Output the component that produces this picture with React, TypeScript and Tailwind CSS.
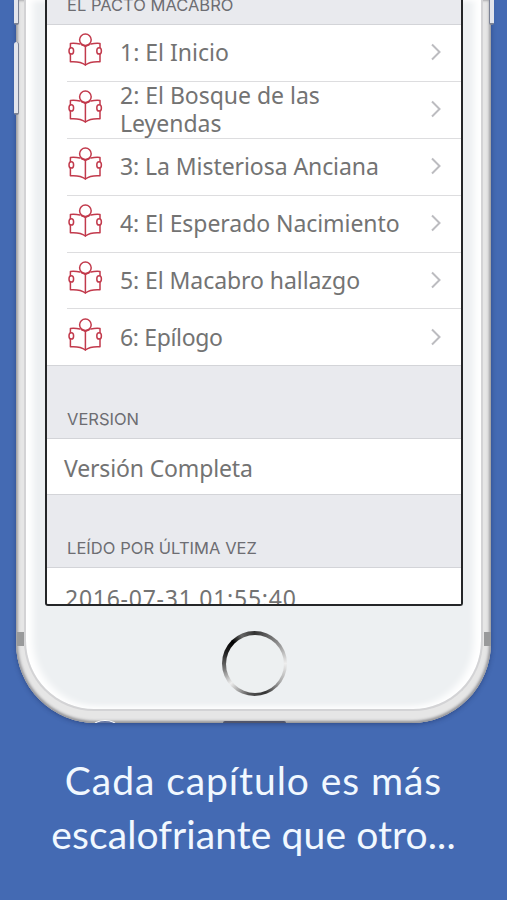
import React from 'react';

const chapters = [
  { id: 1, title: '1: El Inicio', spacing: 'tracking-[0px]' },
  { id: 2, title: '2: El Bosque de las Leyendas', spacing: 'tracking-[-0.02px]' },
  { id: 3, title: '3: La Misteriosa Anciana', spacing: 'tracking-[-0.07px]' },
  { id: 4, title: '4: El Esperado Nacimiento', spacing: 'tracking-[-0.06px]' },
  { id: 5, title: '5: El Macabro hallazgo', spacing: 'tracking-[-0.07px]' },
  { id: 6, title: '6: Epílogo', spacing: 'tracking-[-0.35px]' },
];

const ReaderIcon = () => (
  <svg
    width="36"
    height="36"
    viewBox="0 0 36 36"
    fill="none"
    stroke="#c23a4c"
    strokeWidth="1.5"
    strokeLinejoin="round"
    strokeLinecap="round"
    className="-mt-[3px] shrink-0"
  >
    <circle cx="18.4" cy="7.8" r="5.8" />
    <path d="M3.400 15.600V11.400c3.500-.3 6.500-.1 9.500.6" />
    <path d="M23.900 12c3-.7 6-.9 9.100-.6V15.600" />
    <path d="M14.600 12.700c1.600.4 2.800.9 3.800 1.600 1-.7 2.200-1.200 3.800-1.600" />
    <path d="M3.400 22.200v7.600c6-.4 11.500.5 15 3.200 3.500-2.700 9-3.600 14.600-3.200v-7.600" />
    <path d="M18.400 14.300V33" />
    <ellipse cx="4.300" cy="18.900" rx="2.300" ry="3.200" />
    <ellipse cx="32.100" cy="18.900" rx="2.300" ry="3.200" />
  </svg>
);

const Chevron = () => (
  <svg width="12" height="18" viewBox="0 0 12 18" fill="none" stroke="#bcbcc0" strokeWidth="2">
    <path d="M2 1.500 9.500 9 2 16.500" />
  </svg>
);

const SectionHeader = ({ title, spacing }: { title: string; spacing: string }) => (
  <div className="flex h-[74px] items-end border-y border-[#d3d4d8] bg-[#e9eaee] pb-[7px] pl-5">
    <h2 className={`font-['Inter'] text-[16.5px] leading-6 whitespace-nowrap text-[#6d6d72] ${spacing}`}>{title}</h2>
  </div>
);

const App = () => {
  return (
    <main className="flex h-[900px] w-[507px] flex-col items-center overflow-hidden bg-[#446ab3]">
      {/* Phone */}
      <div className="relative h-[723px] w-[475px] shrink-0">
        <div className="relative h-[723px] overflow-hidden rounded-b-[80px] bg-[#e6e6e6] px-[8px] pb-[12px] shadow-[0_1px_5px_rgba(20,35,80,0.45),inset_0_-2px_3px_#97979a,inset_2px_0_3px_#a4a4a8,inset_-2px_0_3px_#a4a4a8]">
          {/* Antenna bands */}
          <div className="absolute top-[632px] left-px h-[14px] w-[7px] bg-[#999a9b]" />
          <div className="absolute top-[632px] right-0 h-[14px] w-[7px] bg-[#999a9b]" />

          <div className="flex h-[711px] flex-col items-center rounded-b-[70px] border-x-2 border-b-2 border-[#d3d3d5] bg-[#edf0f2] pl-px shadow-[inset_7px_-1px_7px_#ffffff,inset_-7px_-1px_7px_#ffffff]">
            {/* Screen */}
            <div className="h-[606px] w-[418px] shrink-0 overflow-hidden rounded-b-[3px] border-x-[2.500px] border-b-[2.500px] border-[#242628] bg-white">
              <div className="flex h-[25px] items-end border-b border-[#d3d4d8] bg-[#e9eaee] pb-[7px] pl-5">
                <h2 className="font-['Inter'] text-[16.5px] leading-6 whitespace-nowrap text-[#6d6d72]">EL PACTO MACABRO</h2>
              </div>

              <ul>
                {chapters.map((chapter) => (
                  <li
                    key={chapter.id}
                    className="ml-5 flex h-[56.900px] items-center border-b border-[#dddddf] pb-[2px] last:h-[56px] last:border-b-0 last:pb-px"
                  >
                    <ReaderIcon />
                    <span className={`ml-[17px] w-[285px] shrink-0 font-['Noto_Sans'] text-[23px] leading-[28px] text-[#737373] ${chapter.spacing}`}>
                      {chapter.title}
                    </span>
                    <span className="ml-[25px]">
                      <Chevron />
                    </span>
                  </li>
                ))}
              </ul>

              <SectionHeader title="VERSION" spacing="" />
              <div className="flex h-[55px] items-center pt-[3px] pl-[17px] font-['Noto_Sans'] text-[23px] tracking-[-0.15px] text-[#737373]">
                Versión Completa
              </div>
              <SectionHeader title="LEÍDO POR ÚLTIMA VEZ" spacing="tracking-[0.05px]" />
              <div className="flex h-[55px] items-center pt-1 pl-[18px] font-['Noto_Sans'] text-[23px] tracking-[0.75px] whitespace-nowrap text-[#737373]">
                2016-07-31 01:55:40
              </div>
            </div>

            {/* Home button */}
            <div className="mt-[25px] ml-[1px] h-[65px] w-[65px] rounded-full bg-[conic-gradient(#333_0deg,#999_55deg,#eee_90deg,#aaa_125deg,#333_160deg,#555_190deg,#eee_230deg,#777_260deg,#222_290deg,#000_315deg,#666_335deg,#333_360deg)] p-[3.500px]">
              <div className="h-full w-full rounded-full bg-[#edf0f1]" />
            </div>
          </div>

          {/* Bottom ports */}
          <div className="absolute -bottom-[9px] left-[77px] h-3 w-6 rounded-[50%] border border-white bg-[#6576a2]" />
          <div className="absolute bottom-0 left-[207px] h-[2px] w-[63px] rounded-t-sm bg-[#51556a]" />
        </div>

        {/* Side buttons */}
        <div className="absolute top-0 -left-[2px] h-[25px] w-[5px] rounded-b-sm border-r border-b-2 border-[#7b8294] bg-[#e3e5ec]" />
        <div className="absolute top-[42px] -left-[2px] h-[73px] w-[5px] rounded-sm border-r border-b-2 border-[#7b8294] bg-[#e3e5ec]" />
        <div className="absolute top-0 -right-[3px] h-[25px] w-[5px] rounded-b-sm border-b-2 border-l border-[#7b8294] bg-[#e3e5ec]" />
      </div>

      {/* Caption */}
      <p className="mt-[30px] text-center font-['Lato'] text-[39px] leading-[54px] whitespace-nowrap text-[#f1f8ff]">
        <span className="block tracking-[0.93px]">Cada capítulo es más</span>
        <span className="block tracking-[0.1px]">escalofriante que otro...</span>
      </p>
    </main>
  );
};

export default App;
